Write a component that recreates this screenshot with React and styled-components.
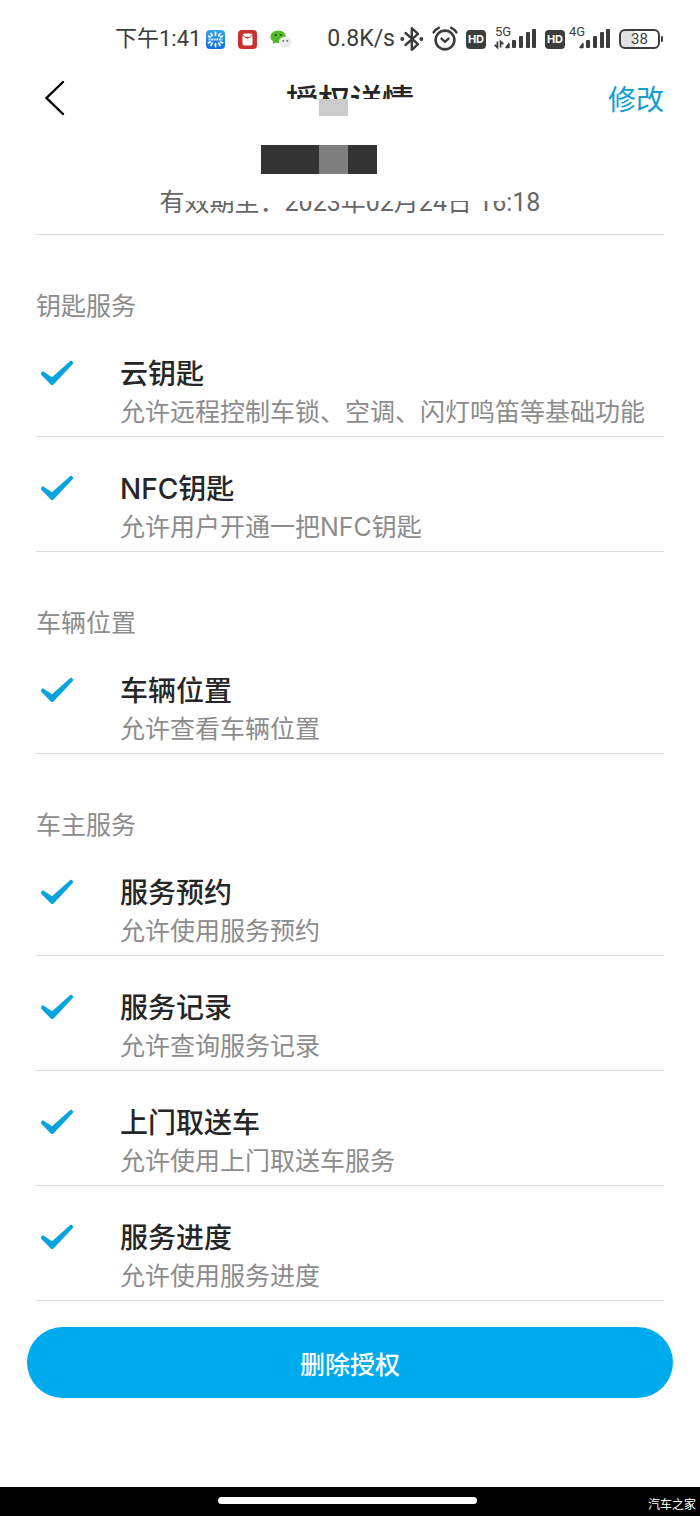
import React from 'react';
import styled, { createGlobalStyle } from "styled-components"

const sections = [
    {
        title: "钥匙服务",
        items: [
            { name: "云钥匙", text: "允许远程控制车锁、空调、闪灯鸣笛等基础功能" },
            { name: "NFC钥匙", text: "允许用户开通一把NFC钥匙" },
        ],
    },
    {
        title: "车辆位置",
        items: [{ name: "车辆位置", text: "允许查看车辆位置" }],
    },
    {
        title: "车主服务",
        items: [
            { name: "服务预约", text: "允许使用服务预约" },
            { name: "服务记录", text: "允许查询服务记录" },
            { name: "上门取送车", text: "允许使用上门取送车服务" },
            { name: "服务进度", text: "允许使用服务进度" },
        ],
    },
]

function CheckIcon(){
    return (
    <svg width="36" height="28" viewBox="0 0 36 28">
        <path d="M3.8 13.4L13.2 19.6L32 2.8L33.2 4L13.8 24.8L12.6 24.8L3 15Z" fill="#0aa3de" stroke="#0aa3de" strokeWidth="2.2" strokeLinejoin="round" />
    </svg>
    )
}

function RouterAppIcon(){
    return (
    <svg width="19" height="19" viewBox="0 0 19 19">
        <defs>
            <linearGradient id="routerBg" x1="0" y1="0" x2="0" y2="1">
                <stop offset="0" stopColor="#35a5ee" />
                <stop offset="1" stopColor="#0f6fdc" />
            </linearGradient>
        </defs>
        <rect width="19" height="19" rx="4" fill="url(#routerBg)" />
        <g stroke="#fff" strokeWidth="1.8" strokeLinecap="round">
            <path d="M9.5 2.5V5M9.5 14V16.5M5 3.6L6.2 5.8M14 3.6L12.8 5.8M5 15.4L6.2 13.2M14 15.4L12.8 13.2M2.6 6.2L4.2 7M16.4 6.2L14.8 7M2.6 12.8L4.2 12M16.4 12.8L14.8 12" />
        </g>
        <path d="M2.5 9.5H16.5" stroke="#d5ecff" strokeWidth="2" strokeDasharray="2 0.6" />
    </svg>
    )
}

function MailAppIcon(){
    return (
    <svg width="19" height="19" viewBox="0 0 19 19">
        <rect width="19" height="19" rx="4" fill="#cb302e" />
        <rect x="4.5" y="3.5" width="10" height="12" rx="2" fill="#fff" />
        <path d="M4.5 5C6.5 8.5 12.5 8.5 14.5 5" fill="none" stroke="#cb302e" strokeWidth="1" />
        <circle cx="9.5" cy="7.8" r="1" fill="#cb302e" />
    </svg>
    )
}

function WechatIcon(){
    return (
    <svg width="22" height="19" viewBox="0 0 22 19">
        <path d="M8.2 0.5C3.8 0.5 0.5 3.3 0.5 6.8C0.5 8.8 1.5 10.5 3.2 11.6L2.6 14L5.3 12.7C6.2 13 7.2 13.1 8.2 13.1C12.6 13.1 15.9 10.3 15.9 6.8C15.9 3.3 12.6 0.5 8.2 0.5Z" fill="#58b82b" />
        <circle cx="5.6" cy="5" r="1" fill="#1e4d0c" />
        <circle cx="10.8" cy="5" r="1" fill="#1e4d0c" />
        <path d="M15.2 6.8C11.6 6.8 8.8 9.2 8.8 12.1C8.8 15 11.6 17.4 15.2 17.4C16 17.4 16.8 17.3 17.5 17L19.8 18.2L19.2 16.2C20.7 15.2 21.6 13.8 21.6 12.1C21.6 9.2 18.8 6.8 15.2 6.8Z" fill="#e9ece8" />
        <circle cx="13.2" cy="10.8" r="0.9" fill="#555" />
        <circle cx="17.4" cy="10.8" r="0.9" fill="#555" />
    </svg>
    )
}

function BluetoothIcon(){
    return (
    <svg width="24" height="26" viewBox="0 0 24 26" fill="none" stroke="#3c3c3c" strokeWidth="2.4" strokeLinejoin="round" strokeLinecap="round">
        <path d="M5.5 7L18 18.2L11.8 23.8V2.2L18 7.8L5.5 19" />
        <circle cx="2.3" cy="13" r="0.8" fill="#3c3c3c" />
        <circle cx="21.3" cy="13" r="0.8" fill="#3c3c3c" />
    </svg>
    )
}

function AlarmIcon(){
    return (
    <svg width="26" height="26" viewBox="0 0 26 26" fill="none" stroke="#3c3c3c" strokeLinecap="round" strokeLinejoin="round">
        <circle cx="13" cy="14" r="9.4" strokeWidth="2.6" />
        <path d="M9.5 12.6L13 15.8L16.5 12.6" strokeWidth="2.4" />
        <path d="M1.6 6.4C2.6 4.4 4.4 2.8 6.8 1.8M24.4 6.4C23.4 4.4 21.6 2.8 19.2 1.8" strokeWidth="2.4" />
    </svg>
    )
}

function SignalIcon({ label, arrows }){
    return (
    <svg width="43" height="36" viewBox="0 -5 43 36" fill="#3c3c3c">
        <text x="1" y="10" fontSize="13">{label}</text>
        {arrows && <path d="M3.4 15.5V21.5L0.6 18.8M6.6 21.5V15.5L9.4 18.2" fill="none" stroke="#3c3c3c" strokeWidth="1.8" />}
        <path d="M15 17.5V21.5H12Z" stroke="#3c3c3c" strokeWidth="1.4" strokeLinejoin="round" />
        <rect x="18" y="14" width="4" height="8" rx="1" />
        <rect x="25" y="10" width="4" height="12" rx="1" />
        <rect x="32" y="6" width="4" height="16" rx="1" />
        <rect x="38" y="3" width="4" height="19" rx="1" />
    </svg>
    )
}

export default function App(){
    return (<>
    <GlobalStyle />
    <Page>
        <StatusBar>
            <StatusGroup $gap="5px">
                <Clock>下午1:41</Clock>
                <AppIcons>
                    <RouterAppIcon />
                    <MailAppIcon />
                    <WechatIcon />
                </AppIcons>
            </StatusGroup>
            <StatusGroup $gap="8px">
                <StatusGroup $gap="5px">
                    <Speed>0.8K/s</Speed>
                    <BluetoothIcon />
                </StatusGroup>
                <AlarmIcon />
                <StatusGroup $gap="8px">
                    <Hd>HD</Hd>
                    <SignalIcon label="5G" arrows />
                </StatusGroup>
                <StatusGroup $gap="3px">
                    <Hd>HD</Hd>
                    <SignalIcon label="4G" />
                </StatusGroup>
                <Battery>38</Battery>
            </StatusGroup>
        </StatusBar>

        <Top>
            <Header>
                <Back type="button" aria-label="返回">
                    <svg width="22" height="38" viewBox="0 0 22 38">
                        <path d="M19 3L2.5 19L19 35" fill="none" stroke="#000" strokeWidth="2.4" strokeLinecap="round" />
                    </svg>
                </Back>
                <Title>授权详情</Title>
                <Edit type="button">修改</Edit>
            </Header>
            <Validity>有效期至：2023年02月24日 16:18</Validity>
            <Cover>
                <CoverPatch />
                <Mosaic><MosaicCell /></Mosaic>
            </Cover>
        </Top>

        <Content>
            {sections.map((section) => (
            <section key={section.title}>
                <SectionTitle>{section.title}</SectionTitle>
                <List>
                    {section.items.map((item) => (
                    <Row key={item.name}>
                        <CheckBox><CheckIcon /></CheckBox>
                        <div>
                            <Name>{item.name}</Name>
                            <Text>{item.text}</Text>
                        </div>
                    </Row>
                    ))}
                </List>
            </section>
            ))}
        </Content>

        <Delete type="button">删除授权</Delete>

        <BottomBar>
            <Pill />
            <Source>汽车之家</Source>
        </BottomBar>
    </Page>
    </>)
}

const GlobalStyle = createGlobalStyle`
* { box-sizing: border-box; }
body {
  margin: 0;
  background: #fff;
  font-family: Roboto, "Noto Sans CJK SC", sans-serif;
}
svg { display: block; flex-shrink: 0; }
button { font-family: inherit; border: none; cursor: pointer; }
`

const Page = styled.div`
display: flex;
flex-direction: column;
min-height: 100vh;
background: #fefefe;
`

const StatusBar = styled.div`
display: flex;
justify-content: space-between;
align-items: center;
height: 78px;
padding: 0 40px 0 115px;
color: #3c3c3c;
`

const StatusGroup = styled.div`
display: flex;
align-items: center;
gap: ${(props) => props.$gap};
`

const Clock = styled.span`
font-size: 22px;
line-height: 32px;
`

const AppIcons = styled.div`
display: flex;
gap: 13px;
`

const Speed = styled.span`
font-size: 23px;
line-height: 32px;
`

const Hd = styled.span`
width: 20px;
height: 19px;
border-radius: 4px;
background: #3c3c3c;
color: #fff;
font-family: Inter, sans-serif;
font-size: 11px;
font-weight: 700;
line-height: 19px;
text-align: center;
`

const Battery = styled.span`
position: relative;
width: 41px;
height: 20px;
border: 2px solid #3c3c3c;
border-radius: 6px;
background: linear-gradient(to right, #e2e2e2 38%, #fff 38%);
font-size: 15px;
line-height: 16px;
text-align: center;
&::after {
  content: "";
  position: absolute;
  top: 5px;
  right: -5px;
  width: 2px;
  height: 6px;
  border-radius: 1px;
  background: #3c3c3c;
}
`

const Top = styled.div`
position: relative;
margin: 0 36px;
border-bottom: 1px solid #dcdcdc;
`

const Header = styled.header`
display: grid;
grid-template-columns: 1fr auto 1fr;
align-items: center;
height: 40px;
font-family: "Noto Sans CJK SC", sans-serif;
`

const Back = styled.button`
justify-self: start;
padding: 0 8px;
background: none;
`

const Title = styled.h1`
margin: 0;
font-size: 32px;
font-weight: 500;
line-height: 40px;
color: #262626;
`

const Edit = styled.button`
justify-self: end;
padding: 0;
background: none;
font-size: 28px;
line-height: 40px;
color: #109fd0;
`

const Validity = styled.p`
margin: 0;
padding: 67px 0 13px;
font-size: 25px;
line-height: 36px;
text-align: center;
color: #666;
`

/* white block hiding the owner's name */
const Cover = styled.div`
position: absolute;
top: 21px;
left: 50%;
width: 320px;
height: 102px;
margin-left: -165px;
background: #fefefe;
`

const CoverPatch = styled.div`
width: 29px;
height: 17px;
margin-left: 134px;
background: #cbcbcb;
`

const Mosaic = styled.div`
width: 116px;
height: 29px;
margin: 29px 0 0 76px;
padding-left: 58px;
background: #333;
`

const MosaicCell = styled.div`
width: 29px;
height: 29px;
background: #7f7f7f;
`

const Content = styled.main`
padding: 0 36px;
font-family: Inter, "Noto Sans CJK SC", sans-serif;
`

const SectionTitle = styled.h2`
margin: 0;
padding-top: 55px;
font-size: 25px;
font-weight: 400;
line-height: 32px;
color: #8c8c8c;
`

const List = styled.ul`
margin: 0;
padding: 0;
list-style: none;
`

const Row = styled.li`
display: flex;
padding: 33px 0 5px;
border-bottom: 1px solid #dcdcdc;
`

const CheckBox = styled.div`
flex: 0 0 84px;
padding: 4px 3px;
`

const Name = styled.div`
font-size: 28px;
font-weight: 500;
line-height: 38px;
color: #262626;
`

const Text = styled.div`
font-size: 25px;
line-height: 38px;
color: #8c8c8c;
white-space: nowrap;
`

const Delete = styled.button`
height: 71px;
margin: 26px 27px 0;
border-radius: 36px;
background: #00abed;
color: #fff;
font-size: 25px;
font-weight: 500;
`

const BottomBar = styled.footer`
position: relative;
display: flex;
justify-content: center;
align-items: center;
height: 29px;
margin-top: auto;
padding: 0 5px 3px 0;
background: #000;
`

const Pill = styled.div`
width: 259px;
max-width: 40%;
height: 7px;
border-radius: 4px;
background: #fff;
`

const Source = styled.span`
position: absolute;
right: 4px;
bottom: 2px;
font-size: 12px;
line-height: 18px;
color: #fff;
`
